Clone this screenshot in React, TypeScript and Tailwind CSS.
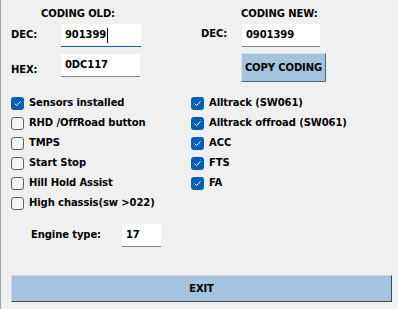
import React from "react";

function Box({ checked }: { checked: boolean }) {
  return checked ? (
    <span className="w-[13px] h-[13px] rounded-[3px] bg-[#005fb8] flex items-center justify-center shrink-0">
      <svg width="9" height="9" viewBox="0 0 9 9">
        <path d="M1.6 4.6 L3.6 6.5 L7.6 2.4" fill="none" stroke="white" strokeWidth="1" />
      </svg>
    </span>
  ) : (
    <span className="w-[13px] h-[13px] rounded-[3px] border border-[#5c5c5c] bg-[#f6f6f6] shrink-0" />
  );
}

function Check({ checked, label }: { checked: boolean; label: string }) {
  return (
    <div className="h-[20px] flex items-center gap-[5px]">
      <Box checked={checked} />
      <span className="leading-[14px] whitespace-nowrap">{label}</span>
    </div>
  );
}

function Field({ w, value, focused, cursor }: { w: string; value: string; focused?: boolean; cursor?: boolean }) {
  return (
    <div
      className={
        "h-[23px] bg-white flex items-center pl-[4px] border-b " +
        (focused ? "border-[#0067c0] " : "border-[#868686] ") +
        w
      }
    >
      <span className="leading-[14px]">{value}</span>
      {cursor && <span className="w-px h-[15px] bg-black ml-px" />}
    </div>
  );
}

export default function App() {
  const left = [
    { c: true, l: "Sensors installed" },
    { c: false, l: "RHD /OffRoad button" },
    { c: false, l: "TMPS" },
    { c: false, l: "Start Stop" },
    { c: false, l: "Hill Hold Assist" },
    { c: false, l: "High chassis(sw >022)" },
  ];
  const right = [
    { c: true, l: "Alltrack (SW061)" },
    { c: true, l: "Alltrack offroad (SW061)" },
    { c: true, l: "ACC" },
    { c: true, l: "FTS" },
    { c: true, l: "FA" },
  ];
  return (
    <div className="w-[398px] h-[309px] bg-[#f0f0f0] border-l border-[#a0a0a0] flex flex-col text-[10px] tracking-[-0.1px] font-bold text-black font-['DejaVu_Sans',Verdana,sans-serif] overflow-hidden">
      <div className="flex pt-[7px]">
        <div className="pl-[10px] w-[200px] flex flex-col">
          <div className="pl-[30px] h-[14px] leading-[14px]">CODING OLD:</div>
          <div className="flex items-start mt-[3px]">
            <div className="w-[50px] mt-[4px] leading-[14px]">DEC:</div>
            <Field w="w-[80px]" value="901399" focused cursor />
          </div>
          <div className="flex items-end mt-[7px]">
            <div className="w-[50px] leading-[14px]">HEX:</div>
            <Field w="w-[79px]" value="0DC117" />
          </div>
        </div>
        <div className="flex flex-col">
          <div className="pl-[40px] h-[14px] leading-[14px]">CODING NEW:</div>
          <div className="flex items-start mt-[3px]">
            <div className="w-[41px] mt-[3px] leading-[14px]">DEC:</div>
            <Field w="w-[78px]" value="0901399" />
          </div>
          <div className="mt-[6px] ml-[40px] w-[85px] h-[29px] bg-[#a4c3df] border border-t-[#d3e2f0] border-l-[#d3e2f0] border-r-[#59636f] border-b-[#59636f] flex items-center justify-center">
            COPY CODING
          </div>
        </div>
      </div>
      <div className="flex mt-[11px]">
        <div className="pl-[10px] w-[190px] flex flex-col">
          {left.map((r) => (
            <Check key={r.l} checked={r.c} label={r.l} />
          ))}
        </div>
        <div className="flex flex-col">
          {right.map((r) => (
            <Check key={r.l} checked={r.c} label={r.l} />
          ))}
        </div>
      </div>
      <div className="flex items-center mt-[11px] pl-[30px]">
        <div className="w-[91px] leading-[14px] -mt-[2px]">Engine type:</div>
        <Field w="w-[39px]" value="17" />
      </div>
      <div className="mt-[28px] ml-[10px] w-[381px] h-[27px] bg-[#a5c3de] border border-t-[#c9dbec] border-l-[#c9dbec] border-r-[#3f4956] border-b-[#3f4956] flex items-center justify-center">
        EXIT
      </div>
    </div>
  );
}
